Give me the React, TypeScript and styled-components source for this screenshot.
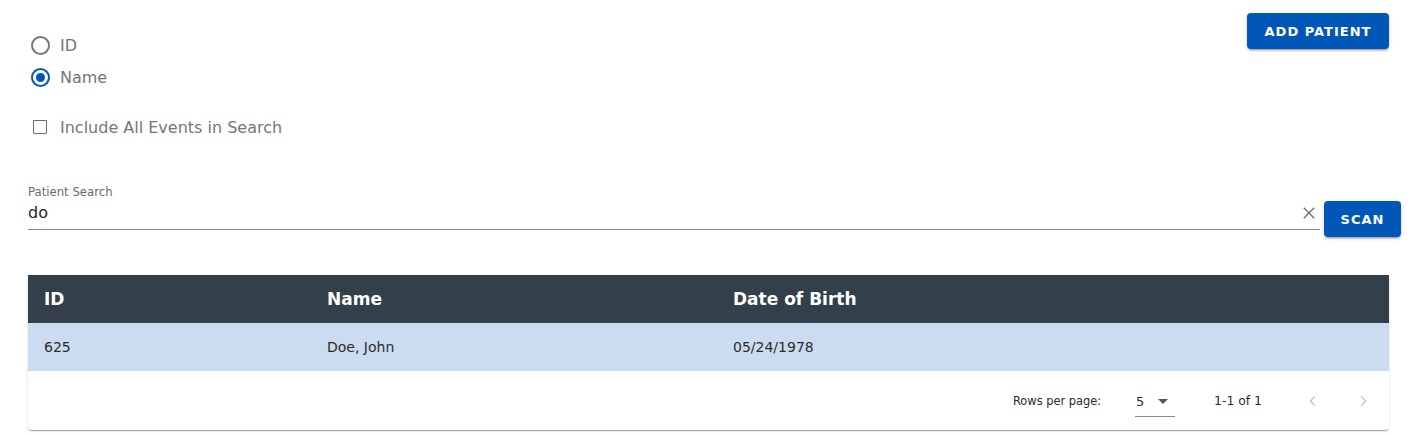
import React from "react";
import styled, { createGlobalStyle } from "styled-components";

const Global = createGlobalStyle`
  html, body { margin: 0; padding: 0; background: #fff; }
  body { font-family: "DejaVu Sans", Verdana, sans-serif; }
  * { box-sizing: border-box; }
`;

const Page = styled.div`
  width: 1426px;
  height: 435px;
  padding: 13px 37px 0 28px;
`;

const TopRow = styled.div`
  display: flex;
  justify-content: space-between;
  align-items: flex-start;
`;

const Options = styled.div`
  display: flex;
  flex-direction: column;
  padding-top: 20px;
`;

const OptionRow = styled.label<{ $gapTop?: number }>`
  display: flex;
  align-items: center;
  height: 24px;
  margin-top: ${(p) => p.$gapTop ?? 0}px;
  gap: 8px;
  color: #767676;
  font-size: 16px;
  font-family: "DejaVu Sans", Verdana, sans-serif;
`;

const IconBox = styled.span`
  width: 24px;
  display: flex;
  align-items: center;
  justify-content: center;
`;

const RadioCircle = styled.span<{ $checked?: boolean }>`
  width: 19px;
  height: 19px;
  border-radius: 50%;
  border: 2px solid ${(p) => (p.$checked ? "#0057b8" : "#767676")};
  display: flex;
  align-items: center;
  justify-content: center;
  &::after {
    content: "";
    width: 9px;
    height: 9px;
    border-radius: 50%;
    background: ${(p) => (p.$checked ? "#0057b8" : "transparent")};
  }
`;

const CheckSquare = styled.span`
  width: 14px;
  height: 14px;
  border: 1.5px solid #6f6f6f;
  border-radius: 1px;
`;

const Button = styled.button`
  background: #0057b8;
  color: #fff;
  border: none;
  border-radius: 4px;
  height: 36px;
  font-family: "DejaVu Sans", Verdana, sans-serif;
  font-weight: bold;
  font-size: 13px;
  letter-spacing: 1px;
  text-transform: uppercase;
  box-shadow: 0 3px 1px -2px rgba(0,0,0,0.2), 0 2px 2px 0 rgba(0,0,0,0.14), 0 1px 5px 0 rgba(0,0,0,0.12);
  cursor: pointer;
`;

const AddButton = styled(Button)`
  width: 142px;
`;

const ScanButton = styled(Button)`
  width: 77px;
  margin-top: 17px;
`;

const SearchRow = styled.div`
  display: flex;
  align-items: flex-start;
  gap: 4px;
  margin-top: 45px;
  margin-right: -12px;
`;

const Field = styled.div`
  flex: 1;
  border-bottom: 1px solid #8c8c8c;
  position: relative;
  height: 46px;
`;

const FieldLabel = styled.div`
  font-size: 11.7px;
  color: #6b6b6b;
  line-height: 16px;
`;

const FieldValue = styled.div`
  font-size: 16px;
  color: #222;
  line-height: 20px;
  margin-top: 3px;
`;

const ClearIcon = styled.svg`
  position: absolute;
  right: 2px;
  top: 20px;
`;

const Table = styled.div`
  margin-top: 38px;
  border-radius: 0 0 4px 4px;
  box-shadow: 0 2px 1px -1px rgba(0,0,0,0.2), 0 1px 1px 0 rgba(0,0,0,0.14), 0 1px 3px 0 rgba(0,0,0,0.12);
  overflow: hidden;
`;

const Row = styled.div<{ $head?: boolean }>`
  display: grid;
  grid-template-columns: 283px 406px 1fr;
  height: 48px;
  align-items: center;
  padding-left: 16px;
  background: ${(p) => (p.$head ? "#333f49" : "#ccdcf0")};
  color: ${(p) => (p.$head ? "#fff" : "#2b2b2b")};
  font-size: ${(p) => (p.$head ? "17px" : "14px")};
  font-weight: ${(p) => (p.$head ? "bold" : "normal")};
`;

const Footer = styled.div`
  height: 59px;
  display: flex;
  align-items: center;
  justify-content: flex-end;
  font-size: 12px;
  color: #2b2b2b;
  padding-right: 14px;
`;

const RowsLabel = styled.span`
  font-size: 11.4px;
  margin-right: 34px;
`;

const Select = styled.div`
  width: 40px;
  height: 31px;
  display: flex;
  align-items: center;
  justify-content: space-between;
  padding: 1px 7px 0 1px;
  border-bottom: 1px solid #8c8c8c;
  margin-top: 2px;
  margin-right: 39px;
`;

const SelectText = styled.span`
  font-size: 13px;
`;

const Caret = styled.span`
  width: 0;
  height: 0;
  border-left: 5px solid transparent;
  border-right: 5px solid transparent;
  border-top: 5px solid #555;
`;

const Range = styled.span`
  margin-right: 13px;
  font-size: 12.4px;
`;

const NavBtn = styled.span`
  width: 24px;
  height: 24px;
  display: flex;
  align-items: center;
  justify-content: center;
  margin-left: 26px;
`;

const Chevron = ({ dir }: { dir: "l" | "r" }) => (
  <svg width="16" height="16" viewBox="0 0 24 24">
    <path
      d={dir === "l" ? "M15 5 L8 12 L15 19" : "M9 5 L16 12 L9 19"}
      fill="none"
      stroke="#c4c4c4"
      strokeWidth="2"
    />
  </svg>
);

export default function App() {
  return (
    <>
      <Global />
      <Page>
        <TopRow>
          <Options>
            <OptionRow>
              <IconBox><RadioCircle /></IconBox>ID
            </OptionRow>
            <OptionRow $gapTop={8}>
              <IconBox><RadioCircle $checked /></IconBox>Name
            </OptionRow>
            <OptionRow $gapTop={26}>
              <IconBox><CheckSquare /></IconBox>Include All Events in Search
            </OptionRow>
          </Options>
          <AddButton>Add Patient</AddButton>
        </TopRow>
        <SearchRow>
          <Field>
            <FieldLabel>Patient Search</FieldLabel>
            <FieldValue>do</FieldValue>
            <ClearIcon width="18" height="18" viewBox="0 0 24 24">
              <path d="M5 5 L19 19 M19 5 L5 19" stroke="#666" strokeWidth="1.6" fill="none" />
            </ClearIcon>
          </Field>
          <ScanButton>Scan</ScanButton>
        </SearchRow>
        <Table>
          <Row $head>
            <span>ID</span>
            <span>Name</span>
            <span>Date of Birth</span>
          </Row>
          <Row>
            <span>625</span>
            <span>Doe, John</span>
            <span>05/24/1978</span>
          </Row>
          <Footer>
            <RowsLabel>Rows per page:</RowsLabel>
            <Select>
              <SelectText>5</SelectText>
              <Caret />
            </Select>
            <Range>1-1 of 1</Range>
            <NavBtn><Chevron dir="l" /></NavBtn>
            <NavBtn><Chevron dir="r" /></NavBtn>
          </Footer>
        </Table>
      </Page>
    </>
  );
}
